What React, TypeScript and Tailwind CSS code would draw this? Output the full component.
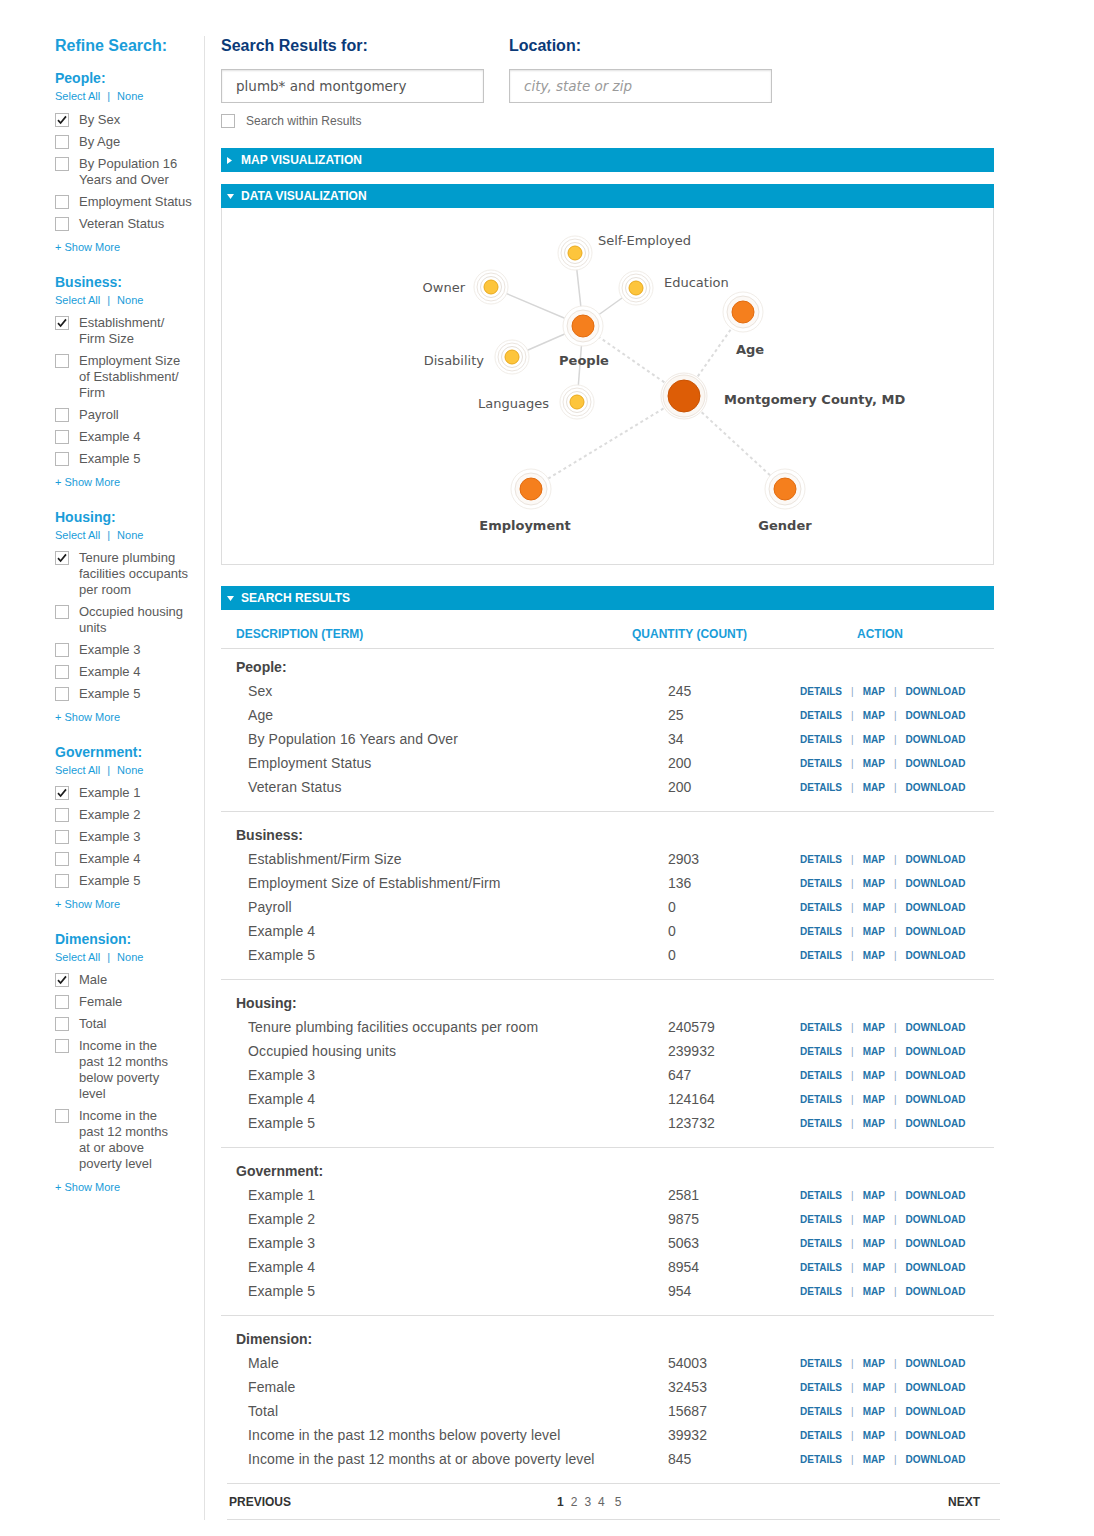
import React from "react";

type FilterItem = { lines: string[]; checked?: boolean };
type FilterGroup = { title: string; items: FilterItem[] };

const filterGroups: FilterGroup[] = [
  {
    title: "People:",
    items: [
      { lines: ["By Sex"], checked: true },
      { lines: ["By Age"] },
      { lines: ["By Population 16", "Years and Over"] },
      { lines: ["Employment Status"] },
      { lines: ["Veteran Status"] },
    ],
  },
  {
    title: "Business:",
    items: [
      { lines: ["Establishment/", "Firm Size"], checked: true },
      { lines: ["Employment Size", "of Establishment/", "Firm"] },
      { lines: ["Payroll"] },
      { lines: ["Example 4"] },
      { lines: ["Example 5"] },
    ],
  },
  {
    title: "Housing:",
    items: [
      { lines: ["Tenure plumbing", "facilities occupants", "per room"], checked: true },
      { lines: ["Occupied housing", "units"] },
      { lines: ["Example 3"] },
      { lines: ["Example 4"] },
      { lines: ["Example 5"] },
    ],
  },
  {
    title: "Government:",
    items: [
      { lines: ["Example 1"], checked: true },
      { lines: ["Example 2"] },
      { lines: ["Example 3"] },
      { lines: ["Example 4"] },
      { lines: ["Example 5"] },
    ],
  },
  {
    title: "Dimension:",
    items: [
      { lines: ["Male"], checked: true },
      { lines: ["Female"] },
      { lines: ["Total"] },
      { lines: ["Income in the", "past 12 months", "below poverty", "level"] },
      { lines: ["Income in the", "past 12 months", "at or above", "poverty level"] },
    ],
  },
];

type ResultSection = { title: string; rows: [string, string][] };

const results: ResultSection[] = [
  {
    title: "People:",
    rows: [
      ["Sex", "245"],
      ["Age", "25"],
      ["By Population 16 Years and Over", "34"],
      ["Employment Status", "200"],
      ["Veteran Status", "200"],
    ],
  },
  {
    title: "Business:",
    rows: [
      ["Establishment/Firm Size", "2903"],
      ["Employment Size of Establishment/Firm", "136"],
      ["Payroll", "0"],
      ["Example 4", "0"],
      ["Example 5", "0"],
    ],
  },
  {
    title: "Housing:",
    rows: [
      ["Tenure plumbing facilities occupants per room", "240579"],
      ["Occupied housing units", "239932"],
      ["Example 3", "647"],
      ["Example 4", "124164"],
      ["Example 5", "123732"],
    ],
  },
  {
    title: "Government:",
    rows: [
      ["Example 1", "2581"],
      ["Example 2", "9875"],
      ["Example 3", "5063"],
      ["Example 4", "8954"],
      ["Example 5", "954"],
    ],
  },
  {
    title: "Dimension:",
    rows: [
      ["Male", "54003"],
      ["Female", "32453"],
      ["Total", "15687"],
      ["Income in the past 12 months below poverty level", "39932"],
      ["Income in the past 12 months at or above poverty level", "845"],
    ],
  },
];

const Checkbox = ({ checked }: { checked?: boolean }) => (
  <span className="flex h-[14px] w-[14px] shrink-0 items-center justify-center border border-[#b8b8b8] bg-white">
    {checked && (
      <svg width="12" height="12" viewBox="0 0 12 12">
        <path d="M2 6.2 L4.6 9 L10 2.4" fill="none" stroke="#1c1c1c" strokeWidth="1.7" />
      </svg>
    )}
  </span>
);

const Sidebar = () => (
  <aside className="w-[205px] shrink-0 border-r border-[#e2e2e2] pl-[55px] pb-[20px]">
    <h2 className="h-5 text-[16px] font-bold leading-5 text-[#1a9dd9]">Refine Search:</h2>
    {filterGroups.map((group, gi) => (
      <div key={group.title} className={gi === 0 ? "mt-[13px]" : "mt-[18px]"}>
        <h3 className="h-[18px] text-[14px] font-bold leading-[18px] text-[#1a9dd9]">{group.title}</h3>
        <div className="flex h-[18px] items-center text-[11px] text-[#1a9dd9]">
          <span>Select All</span>
          <span className="mx-[7px] text-[#1a9dd9]">|</span>
          <span>None</span>
        </div>
        <ul className={(gi === 0 ? "mt-[7px]" : "mt-[6px]") + " flex flex-col gap-[6px]"}>
          {group.items.map((item, i) => (
            <li key={i} className="flex items-start gap-[10px]">
              <span className="pt-[1px]">
                <Checkbox checked={item.checked} />
              </span>
              <span className="text-[13px] leading-4 whitespace-nowrap text-[#5a5a5a]">
                {item.lines.map((l, li) => (
                  <span key={li} className="block">
                    {l}
                  </span>
                ))}
              </span>
            </li>
          ))}
        </ul>
        <div className="mt-[7px] h-4 text-[11px] leading-4 text-[#1a9dd9]">+ Show More</div>
      </div>
    ))}
  </aside>
);

const Bar = ({ label, open }: { label: string; open?: boolean }) => (
  <div className="flex h-6 items-center bg-[#009ccc] pl-[6px] text-[12px] font-bold text-white">
    <span className="flex w-[14px] items-center">
      {open ? (
        <svg width="7" height="5" viewBox="0 0 7 5">
          <path d="M0 0 H7 L3.5 5 Z" fill="#fff" />
        </svg>
      ) : (
        <svg width="5" height="7" viewBox="0 0 5 7">
          <path d="M0 0 V7 L5 3.5 Z" fill="#fff" />
        </svg>
      )}
    </span>
    {label}
  </div>
);

const SmallNode = ({ x, y }: { x: number; y: number }) => (
  <g>
    <circle cx={x} cy={y} r="17" fill="#fff" stroke="#f1ede8" strokeWidth="1" />
    <circle cx={x} cy={y} r="14" fill="#fff" stroke="#ebe5df" strokeWidth="1" />
    <circle cx={x} cy={y} r="10.5" fill="#fff" stroke="#e6e0d9" strokeWidth="1" />
    <circle cx={x} cy={y} r="7" fill="#fdc53c" stroke="#e9a91c" strokeWidth="1" />
  </g>
);

const MidNode = ({ x, y }: { x: number; y: number }) => (
  <g>
    <circle cx={x} cy={y} r="20" fill="#fff" stroke="#f1ede8" strokeWidth="1" />
    <circle cx={x} cy={y} r="16" fill="#fcf9f6" stroke="#ebe4dd" strokeWidth="1" />
    <circle cx={x} cy={y} r="11" fill="#f57f1d" stroke="#e26c10" strokeWidth="1" />
  </g>
);

const Diagram = () => {
  const people = { x: 583, y: 326 };
  const county = { x: 684, y: 396 };
  const spokes = [
    { x: 575, y: 253 },
    { x: 491, y: 287 },
    { x: 636, y: 288 },
    { x: 512, y: 357 },
    { x: 577, y: 402 },
  ];
  const branches = [
    { x: 743, y: 312 },
    { x: 531, y: 489 },
    { x: 785, y: 489 },
  ];
  const label = "font-['DejaVu_Sans',sans-serif] text-[13px]";
  return (
    <svg width="771" height="356" viewBox="222 208 771 356" className="block">
      {spokes.map((s, i) => (
        <line key={i} x1={people.x} y1={people.y} x2={s.x} y2={s.y} stroke="#d6d6d6" strokeWidth="1.5" />
      ))}
      <line x1={people.x} y1={people.y} x2={county.x} y2={county.y} stroke="#dcdcdc" strokeWidth="2" strokeDasharray="3 3" />
      {branches.map((b, i) => (
        <line key={i} x1={county.x} y1={county.y} x2={b.x} y2={b.y} stroke="#dcdcdc" strokeWidth="2" strokeDasharray="3 3" />
      ))}
      {spokes.map((s, i) => (
        <SmallNode key={i} x={s.x} y={s.y} />
      ))}
      <MidNode x={people.x} y={people.y} />
      {branches.map((b, i) => (
        <MidNode key={i} x={b.x} y={b.y} />
      ))}
      <circle cx={county.x} cy={county.y} r="23" fill="#fff" stroke="#efe9e3" strokeWidth="1" />
      <circle cx={county.x} cy={county.y} r="21" fill="#fbf7f3" stroke="#ece4dc" strokeWidth="1" />
      <circle cx={county.x} cy={county.y} r="16" fill="#dd5d06" stroke="#c95304" strokeWidth="1" />

      <g className={label} fill="#555">
        <text x="598" y="244.5">Self-Employed</text>
        <text x="465" y="291.5" textAnchor="end">Owner</text>
        <text x="664" y="286.5">Education</text>
        <text x="484" y="364.5" textAnchor="end">Disability</text>
        <text x="549" y="407.5" textAnchor="end">Languages</text>
      </g>
      <g className={label} fill="#4a4a4a" fontWeight="bold">
        <text x="584" y="364.5" textAnchor="middle">People</text>
        <text x="750" y="353.5" textAnchor="middle">Age</text>
        <text x="724" y="403.5">Montgomery County, MD</text>
        <text x="525" y="529.5" textAnchor="middle">Employment</text>
        <text x="785" y="529.5" textAnchor="middle">Gender</text>
      </g>
    </svg>
  );
};

const Actions = () => (
  <div className="flex items-center text-[10px] font-bold text-[#2272a8]">
    <span>DETAILS</span>
    <span className="mx-[9px] font-normal text-[#8aa9c2]">|</span>
    <span>MAP</span>
    <span className="mx-[9px] font-normal text-[#8aa9c2]">|</span>
    <span>DOWNLOAD</span>
  </div>
);

const ResultsTable = () => (
  <div>
    <div className="flex h-[39px] items-end border-b border-[#dddddd] pb-[5px] text-[12px] font-bold text-[#1a9dd9]">
      <span className="w-[411px] pl-[15px]">DESCRIPTION (TERM)</span>
      <span className="w-[225px]">QUANTITY (COUNT)</span>
      <span>ACTION</span>
    </div>
    {results.map((section, si) => (
      <div
        key={section.title}
        className={
          (si === 0 ? "pt-[6px] " : "pt-[11px] ") +
          "pb-3 " +
          (si === results.length - 1 ? "" : "border-b border-[#dddddd]")
        }
      >
        <div className="flex h-6 items-center pl-[15px] text-[14px] font-bold text-[#454545]">{section.title}</div>
        {section.rows.map(([name, count]) => (
          <div key={name} className="flex h-6 items-center text-[14px] text-[#555]">
            <span className="w-[447px] pl-[27px] tracking-[0.12px]">{name}</span>
            <span className="w-[132px]">{count}</span>
            <Actions />
          </div>
        ))}
      </div>
    ))}
    <div className="ml-[6px] flex h-[37px] w-[773px] items-center border-y border-[#dddddd] text-[12px]">
      <span className="w-[330px] pl-[2px] font-bold text-[#333]">PREVIOUS</span>
      <span className="flex items-center text-[#666]">
        <span className="font-bold text-[#333]">1</span>
        <span className="ml-[7px]">2</span>
        <span className="ml-[7px]">3</span>
        <span className="ml-[7px]">4</span>
        <span className="ml-[10px]">5</span>
      </span>
      <span className="ml-auto pr-[20px] font-bold text-[#333]">NEXT</span>
    </div>
  </div>
);

const App = () => {
  return (
    <div className="min-h-[1536px] bg-white font-['Liberation_Sans',Arial,sans-serif]">
      <div className="flex pt-[36px] pb-[14px]">
        <Sidebar />
        <main className="ml-[16px] w-[773px]">
          <div className="flex">
            <div className="w-[288px]">
              <h2 className="h-5 text-[16px] font-bold leading-5 text-[#0b3a78]">Search Results for:</h2>
              <div className="mt-[13px] flex h-[34px] w-[263px] items-center border border-[#c4c4c4] pl-[14px] font-['DejaVu_Sans',sans-serif] text-[13.5px] text-[#555] shadow-[inset_0_1px_2px_rgba(0,0,0,0.12)]">
                plumb* and montgomery
              </div>
            </div>
            <div className="w-[288px]">
              <h2 className="h-5 text-[16px] font-bold leading-5 text-[#0b3a78]">Location:</h2>
              <div className="mt-[13px] flex h-[34px] w-[263px] items-center border border-[#c4c4c4] pl-[14px] font-['DejaVu_Sans',sans-serif] text-[13.5px] italic text-[#9a9a9a] shadow-[inset_0_1px_2px_rgba(0,0,0,0.12)]">
                city, state or zip
              </div>
            </div>
          </div>
          <div className="mt-[10px] flex h-4 items-center gap-[11px] text-[12px] text-[#666]">
            <Checkbox />
            <span>Search within Results</span>
          </div>
          <div className="mt-[19px]">
            <Bar label="MAP VISUALIZATION" />
          </div>
          <div className="mt-3">
            <Bar label="DATA VISUALIZATION" open />
          </div>
          <div className="h-[357px] border border-t-0 border-[#dddddd]">
            <Diagram />
          </div>
          <div className="mt-[21px]">
            <Bar label="SEARCH RESULTS" open />
          </div>
          <ResultsTable />
        </main>
      </div>
    </div>
  );
};

export default App;
